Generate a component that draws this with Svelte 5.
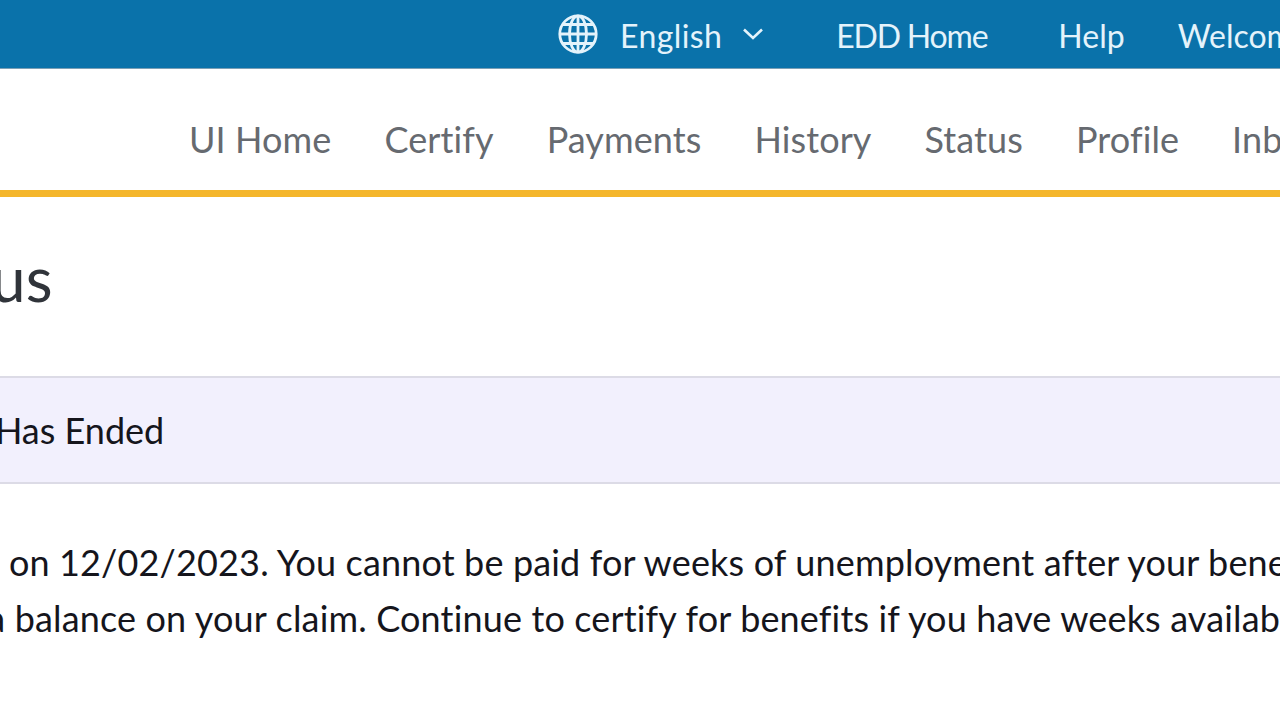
<script>
  const nav = ['UI Home', 'Certify', 'Payments', 'History', 'Status', 'Profile', 'Inbox'];
</script>

<div class="page">
  <header class="top">
    <svg class="globe" viewBox="0 0 40 40" fill="none" stroke="#e4f3fb" stroke-width="2.8" aria-hidden="true">
      <circle cx="20" cy="20" r="18.2" />
      <ellipse cx="20" cy="20" rx="8.5" ry="18.2" />
      <path d="M20 2v36M2 20h36M4.5 10.5h31M4.5 29.5h31" />
    </svg>
    <span class="lang">English</span>
    <svg class="chev" viewBox="0 0 22 14" fill="none" stroke="#e4f3fb" stroke-width="2.6" aria-hidden="true">
      <path d="M2 2.5l9 8.5 9-8.5" />
    </svg>
    <a class="home">EDD Home</a>
    <a class="help">Help</a>
    <a class="welcome">Welcome</a>
  </header>

  <nav class="nav">
    {#each nav as item}
      <a>{item}</a>
    {/each}
  </nav>

  <h1>Status</h1>

  <section class="notice"><span>Benefit Year Has Ended</span></section>

  <div class="copy">
    <p class="one">Your benefit year ended on 12/02/2023. You cannot be paid for weeks of unemployment after your benefit year ended</p>
    <p class="two">You may still have a balance on your claim. Continue to certify for benefits if you have weeks available</p>
  </div>
</div>

<style>
  :global(body) {
    margin: 0;
    background: #fff;
  }
  .page {
    width: 1280px;
    height: 720px;
    overflow: hidden;
    font-family: Lato, "Open Sans", sans-serif;
    font-variant-ligatures: none;
    white-space: nowrap;
    color: #1b1b22;
  }
  .top {
    background: #0a72aa;
    display: flex;
    align-items: center;
    padding: 3px 0 0 558px;
    box-sizing: border-box;
    height: 69px;
    color: #e4f3fb;
    font-size: 32px;
    border-bottom: 1px solid #7b9fb5;
  }
  .globe { width: 40px; height: 40px; flex: none; margin-top: -3px; }
  .lang { margin-left: 22px; letter-spacing: 0.4px; }
  .chev { width: 22px; height: 14px; margin: -3px 0 0 20px; flex: none; }
  .home { margin-left: 72px; letter-spacing: -1.2px; }
  .help { margin-left: 71px; }
  .welcome { margin-left: 53px; }
  .nav {
    height: 128px;
    box-sizing: border-box;
    border-bottom: 7px solid #f4b62c;
    display: flex;
    align-items: center;
    gap: 53px;
    padding: 19px 0 0 189px;
    font-size: 36px;
    letter-spacing: 0.1px;
    color: #666a70;
  }
  h1 {
    margin: 42px 0 0 -116px;
    font-size: 62px;
    line-height: 78px;
    font-weight: 400;
    color: #30343a;
  }
  .notice {
    margin-top: 59px;
    height: 108px;
    box-sizing: border-box;
    background: #f2f0fd;
    border-top: 2px solid #dcdbe6;
    border-bottom: 2px solid #dcdbe6;
    display: flex;
    align-items: center;
    font-size: 36px;
    color: #15151c;
  }
  .notice span { margin-left: -205px; }
  .copy {
    margin-top: 50px;
    font-size: 36px;
    letter-spacing: 0.15px;
    line-height: 56px;
    color: #15151c;
  }
  .copy p { margin: 0; }
  .one { margin-left: -380px !important; }
  .two { margin-left: -305px !important; }
</style>
